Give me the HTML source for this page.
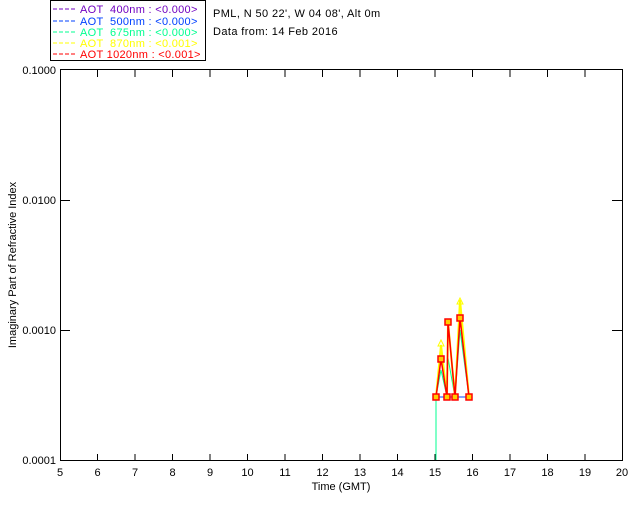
<!DOCTYPE html>
<html><head><style>
html,body{margin:0;padding:0;background:#fff;}
svg text{font-family:"Liberation Sans",sans-serif;font-size:11px;}
</style></head><body>
<svg width="640" height="512" viewBox="0 0 640 512" xmlns="http://www.w3.org/2000/svg">
<rect width="640" height="512" fill="#fff"/>
<rect x="50.5" y="0.5" width="155" height="60" fill="none" stroke="#000"/>
<g stroke-dasharray="4,2" stroke-width="1">
<line x1="53" y1="9" x2="75" y2="9" stroke="#7000c0"/>
<line x1="53" y1="21" x2="75" y2="21" stroke="#0040ff"/>
<line x1="53" y1="32" x2="75" y2="32" stroke="#00ff90"/>
<line x1="53" y1="43" x2="75" y2="43" stroke="#ffff00"/>
<line x1="53" y1="54" x2="75" y2="54" stroke="#ff0000"/>
</g>
<g letter-spacing="0.3">
<text x="80" y="13" fill="#7000c0" xml:space="preserve">AOT  400nm : &lt;0.000&gt;</text>
<text x="80" y="25" fill="#0040ff" xml:space="preserve">AOT  500nm : &lt;0.000&gt;</text>
<text x="80" y="36" fill="#00ff90" xml:space="preserve">AOT  675nm : &lt;0.000&gt;</text>
<text x="80" y="47" fill="#ffff00" xml:space="preserve">AOT  870nm : &lt;0.001&gt;</text>
<text x="80" y="58" fill="#ff0000" xml:space="preserve">AOT 1020nm : &lt;0.001&gt;</text>
</g>
<text x="213" y="17" fill="#000" letter-spacing="0.4">PML, N 50 22', W 04 08', Alt 0m</text>
<text x="213" y="35" fill="#000" letter-spacing="0.4">Data from: 14 Feb 2016</text>
<rect x="60.5" y="69.5" width="562" height="391" fill="none" stroke="#000"/>
<g stroke="#000">
<path d="M97.5 461v-7M135 461v-7M172.5 461v-7M210 461v-7M247.5 461v-7M285 461v-7M322.5 461v-7M360 461v-7M397.5 461v-7M435 461v-7M472.5 461v-7M510 461v-7M547.5 461v-7M585 461v-7"/>
<path d="M97.5 70v7M135 70v7M172.5 70v7M210 70v7M247.5 70v7M285 70v7M322.5 70v7M360 70v7M397.5 70v7M435 70v7M472.5 70v7M510 70v7M547.5 70v7M585 70v7"/>
<path d="M60 200.5h10M60 330.5h10M622 200.5h-10M622 330.5h-10"/>
</g>
<g text-anchor="middle" fill="#000">
<text x="60" y="476">5</text><text x="97.5" y="476">6</text><text x="135" y="476">7</text><text x="172.5" y="476">8</text><text x="210" y="476">9</text><text x="247.5" y="476">10</text><text x="285" y="476">11</text><text x="322.5" y="476">12</text><text x="360" y="476">13</text><text x="397.5" y="476">14</text><text x="435" y="476">15</text><text x="472.5" y="476">16</text><text x="510" y="476">17</text><text x="547.5" y="476">18</text><text x="585" y="476">19</text><text x="622" y="476">20</text>
<text x="341" y="490">Time (GMT)</text>
</g>
<g text-anchor="end" fill="#000">
<text x="56" y="74">0.1000</text><text x="56" y="204">0.0100</text><text x="56" y="334">0.0010</text><text x="56" y="464">0.0001</text>
</g>
<text transform="translate(16,265) rotate(-90)" text-anchor="middle" fill="#000">Imaginary Part of Refractive Index</text>
<polyline points="436,460 436,397 441,370 447,397 448,358 455,397 460,330 469,397" fill="none" stroke="#00ff90"/>
<polyline points="436,397 441,345 447,397 448,322 455,397 460,300 469,397" fill="none" stroke="#ffff00" stroke-width="2"/>
<path d="M441,340 l-3,6 h6z M460,298 l-3,6 h6z" fill="none" stroke="#ffff00"/>
<polyline points="436,397 441,359 447,397 448,322 455,397 460,318 469,397" fill="none" stroke="#ff0000" stroke-width="1.5"/>
<line x1="436" y1="397" x2="469" y2="397" stroke="#0040ff"/>
<g fill="#ffcc00" stroke="#ff0000" stroke-width="1.5">
<rect x="433" y="394" width="6" height="6"/><rect x="444" y="394" width="6" height="6"/><rect x="452" y="394" width="6" height="6"/><rect x="466" y="394" width="6" height="6"/>
<rect x="438" y="356" width="6" height="6"/><rect x="445" y="319" width="6" height="6"/><rect x="457" y="315" width="6" height="6"/>
</g>
</svg>
</body></html>
